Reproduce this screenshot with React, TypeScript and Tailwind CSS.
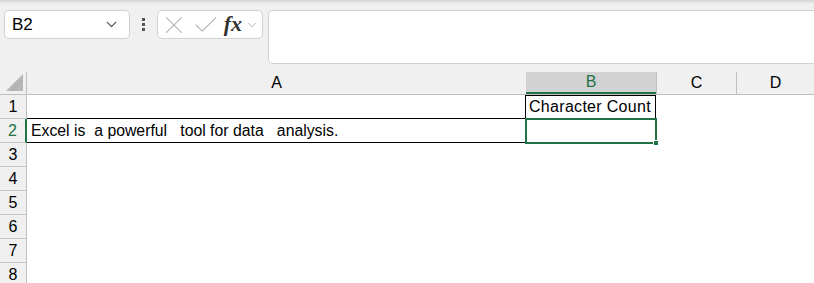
import { ChevronDown, X, Check } from "lucide-react";

const rows = [1, 2, 3, 4, 5, 6, 7, 8];

function RowHeader({ n, active }: { n: number; active?: boolean }) {
  return (
    <div
      className={`w-[27px] shrink-0 h-full bg-[#f0f0f0] border-b border-[#c6c6c6] flex items-center justify-center text-[16px] ${
        active ? "text-[#217346] border-r-2 border-r-[#217346]" : "text-black border-r border-r-[#bfbfbf]"
      }`}
    >
      {n}
    </div>
  );
}

export default function App() {
  return (
    <div className="w-[814px] h-[283px] overflow-hidden bg-white font-['Liberation_Sans',Arial,sans-serif] text-black">
      {/* formula bar */}
      <div className="h-[72px] bg-[#f0f0f0] relative">
        <div className="h-[4px] bg-gradient-to-b from-[#d4d4d4] to-[#f0f0f0]" />
        <div className="flex items-start pt-[6px] pl-[4px]">
          <div className="w-[126px] h-[29px] bg-white border border-[#d1d1d1] rounded-[5px] flex items-center justify-between pl-[7px] pr-[9px]">
            <span className="text-[17px]">B2</span>
            <ChevronDown size={17} strokeWidth={1.5} className="text-[#444]" />
          </div>
          <div className="w-[27px] h-[29px] flex flex-col items-center justify-center gap-[2px]">
            <div className="w-[3px] h-[3px] bg-[#555]" />
            <div className="w-[3px] h-[3px] bg-[#555]" />
            <div className="w-[3px] h-[3px] bg-[#555]" />
          </div>
          <div className="w-[106px] h-[29px] bg-white border border-[#d1d1d1] rounded-[5px] flex items-center pl-[1px] pr-[3px]">
            <X size={30} strokeWidth={0.9} className="text-[#b3b3b3]" />
            <Check size={30} strokeWidth={0.9} className="text-[#b3b3b3] ml-[2px]" />
            <span className="ml-[3px] font-['Liberation_Serif',serif] italic font-semibold text-[22px] leading-none text-[#333] -mt-[2px]">
              fx
            </span>
            <ChevronDown size={14} strokeWidth={1.2} className="text-[#999] ml-[3px]" />
          </div>
          <div className="flex-1 h-[54px] ml-[5px] bg-white border border-[#d1d1d1] rounded-l-[5px] border-r-0" />
        </div>
      </div>

      {/* column headers */}
      <div className="h-[23px] flex bg-[#f0f0f0] border-b border-[#bfbfbf] text-[16px]">
        <div className="w-[27px] shrink-0 border-r border-[#bfbfbf] flex items-end justify-end pb-[3px] pr-[3px]">
          <svg width="17" height="17" viewBox="0 0 17 17">
            <polygon points="17,0 17,17 0,17" fill="#b5b5b5" />
          </svg>
        </div>
        <div className="w-[499px] shrink-0 flex items-center justify-center">A</div>
        <div className="w-[130px] shrink-0 bg-[#d2d2d2] border-b-2 border-[#217346] text-[#217346] flex items-center justify-center">
          B
        </div>
        <div className="w-[80px] shrink-0 border-l border-[#bfbfbf] flex items-center justify-center">C</div>
        <div className="flex-1 border-l border-[#bfbfbf] flex items-center justify-center">D</div>
      </div>

      {/* rows */}
      <div className="text-[16px]">
        {rows.map((n) => (
          <div key={n} className="h-[24px] flex">
            <RowHeader n={n} active={n === 2} />
            {n === 1 && (
              <>
                <div className="w-[499px] shrink-0" />
                <div className="w-[131px] shrink-0 border border-black flex items-center pl-[3px] -ml-px tracking-[0.3px]">
                  Character Count
                </div>
              </>
            )}
            {n === 2 && (
              <>
                <div className="w-[499px] shrink-0 border border-black border-l-0 -mt-px h-[25px] flex items-center pl-[4px] whitespace-pre text-[15.8px]">
                  {"Excel is  a powerful   tool for data   analysis."}
                </div>
                <div className="relative w-[131px] shrink-0">
                  <div className="absolute -left-[1px] -top-[1px] w-[132px] h-[26px] border-2 border-[#217346]" />
                  <div className="absolute left-[127px] top-[21px] w-[6px] h-[6px] bg-[#217346] border border-white" />
                </div>
              </>
            )}
          </div>
        ))}
      </div>
    </div>
  );
}
